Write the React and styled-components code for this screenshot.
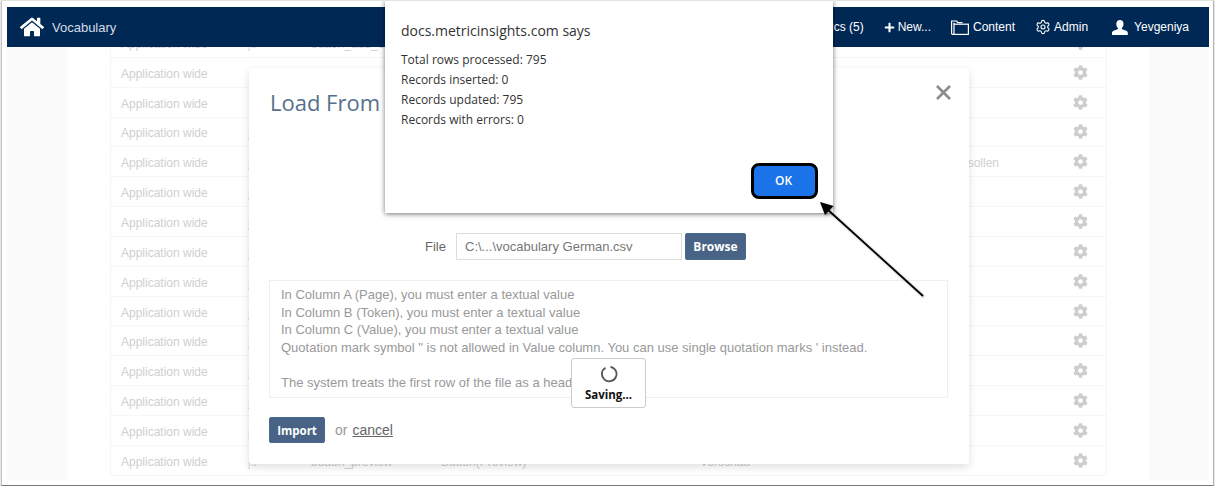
import React from "react";

import styled, { createGlobalStyle } from "styled-components";
import { FaCog, FaHome, FaPlus } from "react-icons/fa";
import { Settings } from "lucide-react";

const GlobalStyle = createGlobalStyle`
  html, body {
    margin: 0;
    padding: 0;
    background: #fff;
    font-family: "Liberation Sans", Arial, sans-serif;
  }
`;

const ROWS = [
  { type: "js", name: "button_add_element" },
  {},
  {},
  { type: "js" },
  { type: "js", value: "sollen", end: true },
  { type: "js" },
  { type: "js" },
  { type: "js" },
  { type: "js" },
  { type: "js" },
  { type: "js" },
  { type: "js" },
  { type: "js" },
  { type: "js" },
  { type: "js", name: "button_preview", label: "Button(Preview)", value: "Vorschau" },
];

const FolderIcon = () => (
  <svg width="18" height="15" viewBox="0 0 18 15" fill="none" stroke="#fff" strokeWidth="1.2">
    <path d="M.6 13.900V1h5l1.300 1.600h4.500" />
    <rect x="3" y="4.200" width="14.400" height="10.200" />
    <path d="M.6 14.400H3M3 4.200V2.800" />
  </svg>
);

const UserIcon = () => (
  <svg width="16" height="15" viewBox="0 0 16 15" fill="#fff">
    <path d="M8 0c2.200 0 3.500 1.600 3.500 3.900 0 1.600-.7 3.200-1.600 4.100-.3.400-.2 1 .3 1.200l4 1.600c1 .4 1.600 1.200 1.600 2.200V15H0v-2c0-1 .6-1.800 1.600-2.200l4-1.600c.5-.2.6-.8.3-1.200-.9-.9-1.600-2.500-1.600-4.100C4.300 1.600 5.800 0 8 0z" />
  </svg>
);

const CloseIcon = () => (
  <svg width="15" height="15" viewBox="0 0 15 15" stroke="#8c8c8c" strokeWidth="2.600">
    <path d="M1 1l13 13M14 1L1 14" />
  </svg>
);

const Spinner = () => (
  <svg width="18" height="18" viewBox="0 0 18 18" fill="none">
    <path
      d="M5.500 2.700A7.300 7.300 0 1 0 10.500 1.800"
      stroke="#555"
      strokeWidth="1.800"
    />
  </svg>
);

const App = () => {
  return (
    <>
      <GlobalStyle />
      <Frame>
        <Nav>
          <NavHome>
            <FaHome size={24} color="#fff" />
            <NavTitle>Vocabulary</NavTitle>
          </NavHome>
          <NavMenu>
            <NavItem>Topics (5)</NavItem>
            <NavItem>
              <FaPlus size={11} />
              New...
            </NavItem>
            <NavItem $gap={4}>
              <FolderIcon />
              Content
            </NavItem>
            <NavItem>
              <Settings size={16} strokeWidth={1.6} />
              Admin
            </NavItem>
            <NavItem $gap={6} $push={4}>
              <UserIcon />
              Yevgeniya
            </NavItem>
          </NavMenu>
        </Nav>

        <Backdrop>
          <Page>
            <Table>
              {ROWS.map((row, i) => (
                <Row key={i}>
                  <Scope>Application wide</Scope>
                  <TypeCell $w={63}>{row.type}</TypeCell>
                  <Cell $w={130}>{row.name}</Cell>
                  <Cell $w={259}>{row.label}</Cell>
                  <Cell $w={299} $end={row.end}>
                    {row.value}
                  </Cell>
                  <GearCell>
                    <FaCog size={15} />
                  </GearCell>
                </Row>
              ))}
            </Table>
          </Page>
        </Backdrop>

        <Modal>
          <ModalTitle>Load From</ModalTitle>
          <Close>
            <CloseIcon />
          </Close>
          <FileRow>
            <FileLabel>File</FileLabel>
            <FileInput>C:\...\vocabulary German.csv</FileInput>
            <BlueButton $w={61} $h={27}>
              Browse
            </BlueButton>
          </FileRow>
          <Info>
            <div>In Column A (Page), you must enter a textual value</div>
            <div>In Column B (Token), you must enter a textual value</div>
            <div>In Column C (Value), you must enter a textual value</div>
            <div>
              Quotation mark symbol " is not allowed in Value column. You can
              use single quotation marks ' instead.
            </div>
            <br />
            <div>The system treats the first row of the file as a head</div>
          </Info>
          <Actions>
            <BlueButton $w={56} $h={26} $small>
              Import
            </BlueButton>
            <OrText>or</OrText>
            <CancelLink>cancel</CancelLink>
          </Actions>
          <Saving>
            <Spinner />
            <SavingText>Saving...</SavingText>
          </Saving>
        </Modal>

        <Alert>
          <AlertTitle>docs.metricinsights.com says</AlertTitle>
          <AlertBody>
            <div>Total rows processed: 795</div>
            <div>Records inserted: 0</div>
            <div>Records updated: 795</div>
            <div>Records with errors: 0</div>
          </AlertBody>
          <AlertFooter>
            <OkButton>OK</OkButton>
          </AlertFooter>
        </Alert>

        <Arrow width="120" height="110" viewBox="0 0 120 110">
          <path d="M110 100 L14 13" stroke="#000" strokeWidth="1.800" />
          <path d="M7 6 L20.500 10 L12 19 Z" fill="#000" />
        </Arrow>
      </Frame>
    </>
  );
};

const Frame = styled.div`
  position: relative;
  box-sizing: border-box;
  width: 1213px;
  height: 486px;
  margin-left: 1px;
  overflow: hidden;
  background: #fff;
  border-top: 1px solid #e2e2e2;
  border-left: 1px solid #c4c4c4;
  border-right: 1px solid #b5b5b5;
  border-bottom: 1px solid #777;
  box-shadow: 0 1px 2px rgba(0, 0, 0, 0.3);
`;

const Nav = styled.header`
  position: absolute;
  top: 6px;
  left: 5px;
  z-index: 2;
  box-sizing: border-box;
  width: 1202px;
  height: 40px;
  padding: 0 20px 0 13px;
  display: flex;
  align-items: center;
  justify-content: space-between;
  background: #002855;
  color: #fff;
  font-size: 12px;
`;

const NavHome = styled.div`
  display: flex;
  align-items: center;
  gap: 8px;
`;

const NavTitle = styled.span`
  font-size: 13px;
  color: #d5dce6;
`;

const NavMenu = styled.nav`
  display: flex;
  align-items: center;
  gap: 20px;
`;

const NavItem = styled.span`
  display: flex;
  align-items: center;
  gap: ${(p) => p.$gap || 3}px;
  margin-left: ${(p) => p.$push || 0}px;
`;

const Backdrop = styled.div`
  box-sizing: border-box;
  width: 1202px;
  height: 473px;
  margin: 6px 0 0 5px;
  background: #fbfbfb;
`;

const Page = styled.main`
  box-sizing: border-box;
  width: 1081px;
  height: 100%;
  margin-left: 61px;
  padding: 21px 42px 0;
  background: #fff;
`;

const Table = styled.div`
  box-sizing: border-box;
  width: 997px;
  border-left: 1px solid #f6f6f6;
  border-right: 1px solid #f6f6f6;
`;

const Row = styled.div`
  box-sizing: border-box;
  height: 29.850px;
  display: flex;
  align-items: center;
  border-bottom: 1px solid #f6f6f6;
  font-size: 12px;
  color: #cfcfcf;
`;

const Cell = styled.span`
  box-sizing: border-box;
  width: ${(p) => p.$w}px;
  padding-top: 3px;
  text-align: ${(p) => (p.$end ? "right" : "left")};
  white-space: nowrap;
`;

const Scope = styled(Cell)`
  width: 127px;
  margin-left: 10px;
`;

const TypeCell = styled(Cell)`
  opacity: 0.8;
`;

const GearCell = styled.span`
  margin-left: auto;
  padding-right: 18px;
  display: flex;
  color: #cdcdcd;
`;

const Modal = styled.section`
  position: absolute;
  top: 67px;
  left: 247px;
  box-sizing: border-box;
  width: 720px;
  height: 396px;
  padding: 20px;
  display: flex;
  flex-direction: column;
  background: #fff;
  border-radius: 3px;
  box-shadow: 0 3px 9px rgba(0, 0, 0, 0.13);
`;

const ModalTitle = styled.h2`
  margin: 0 0 0 1px;
  font-family: "Open Sans", sans-serif;
  font-size: 22px;
  font-weight: 400;
  line-height: 28px;
  color: #56708c;
`;

const Close = styled.span`
  position: absolute;
  top: 17px;
  right: 18px;
  display: flex;
`;

const FileRow = styled.div`
  margin-top: 117px;
  padding-left: 156px;
  display: flex;
  align-items: center;
`;

const FileLabel = styled.span`
  width: 31px;
  font-size: 13px;
  color: #666;
`;

const FileInput = styled.div`
  box-sizing: border-box;
  width: 226px;
  height: 27px;
  margin-right: 3px;
  padding-left: 8px;
  display: flex;
  align-items: center;
  border: 1px solid #ddd;
  font-size: 13px;
  color: #777;
`;

const BlueButton = styled.button`
  box-sizing: border-box;
  width: ${(p) => p.$w}px;
  height: ${(p) => p.$h}px;
  padding: 0;
  border: 1px solid #4a6a8c;
  border-radius: 2px;
  background: #486385;
  font-family: "Open Sans", sans-serif;
  font-size: ${(p) => (p.$small ? "11.5px" : "12px")};
  font-weight: 700;
  color: #fff;
`;

const Info = styled.div`
  box-sizing: border-box;
  width: 679px;
  height: 118px;
  margin-top: 20px;
  padding: 5px 11px;
  border: 1px solid #efefef;
  font-size: 13px;
  line-height: 17.600px;
  color: #999;
`;

const Actions = styled.div`
  margin-top: 19px;
  display: flex;
  align-items: center;
  font-size: 14px;
`;

const OrText = styled.span`
  margin-left: 10px;
  color: #999;
`;

const CancelLink = styled.a`
  margin-left: 5px;
  color: #666;
  text-decoration: underline;
`;

const Saving = styled.div`
  position: absolute;
  top: 290px;
  left: 322px;
  box-sizing: border-box;
  width: 75px;
  height: 50px;
  padding-top: 6px;
  display: flex;
  flex-direction: column;
  align-items: center;
  gap: 4px;
  background: #fff;
  border: 1px solid #ccc;
  border-radius: 3px;
`;

const SavingText = styled.span`
  font-family: "Open Sans", sans-serif;
  font-size: 11.500px;
  font-weight: 700;
  color: #111;
`;

const Alert = styled.section`
  position: absolute;
  top: -1px;
  left: 383px;
  z-index: 3;
  box-sizing: border-box;
  width: 448px;
  height: 213px;
  padding: 21px 15px 14px 16px;
  display: flex;
  flex-direction: column;
  background: #fff;
  box-shadow: 0 1px 5px rgba(0, 0, 0, 0.55);
`;

const AlertTitle = styled.div`
  font-family: "Open Sans", sans-serif;
  font-size: 14px;
  line-height: 20px;
  color: #333;
`;

const AlertBody = styled.div`
  margin-top: 9px;
  font-family: "Open Sans", sans-serif;
  font-size: 12px;
  line-height: 20px;
  color: #333;
`;

const AlertFooter = styled.div`
  margin-top: auto;
  display: flex;
  justify-content: flex-end;
`;

const OkButton = styled.button`
  box-sizing: border-box;
  width: 67px;
  height: 36px;
  padding: 0 2px 2px 0;
  border: 3px solid #000;
  border-radius: 8px;
  background: #1a73e8;
  font-family: "Open Sans", sans-serif;
  font-size: 12px;
  font-weight: 600;
  color: #fff;
`;

const Arrow = styled.svg`
  position: absolute;
  top: 195px;
  left: 811px;
  z-index: 4;
  filter: drop-shadow(1px 1px 1px rgba(0, 0, 0, 0.3));
`;

export default App;
